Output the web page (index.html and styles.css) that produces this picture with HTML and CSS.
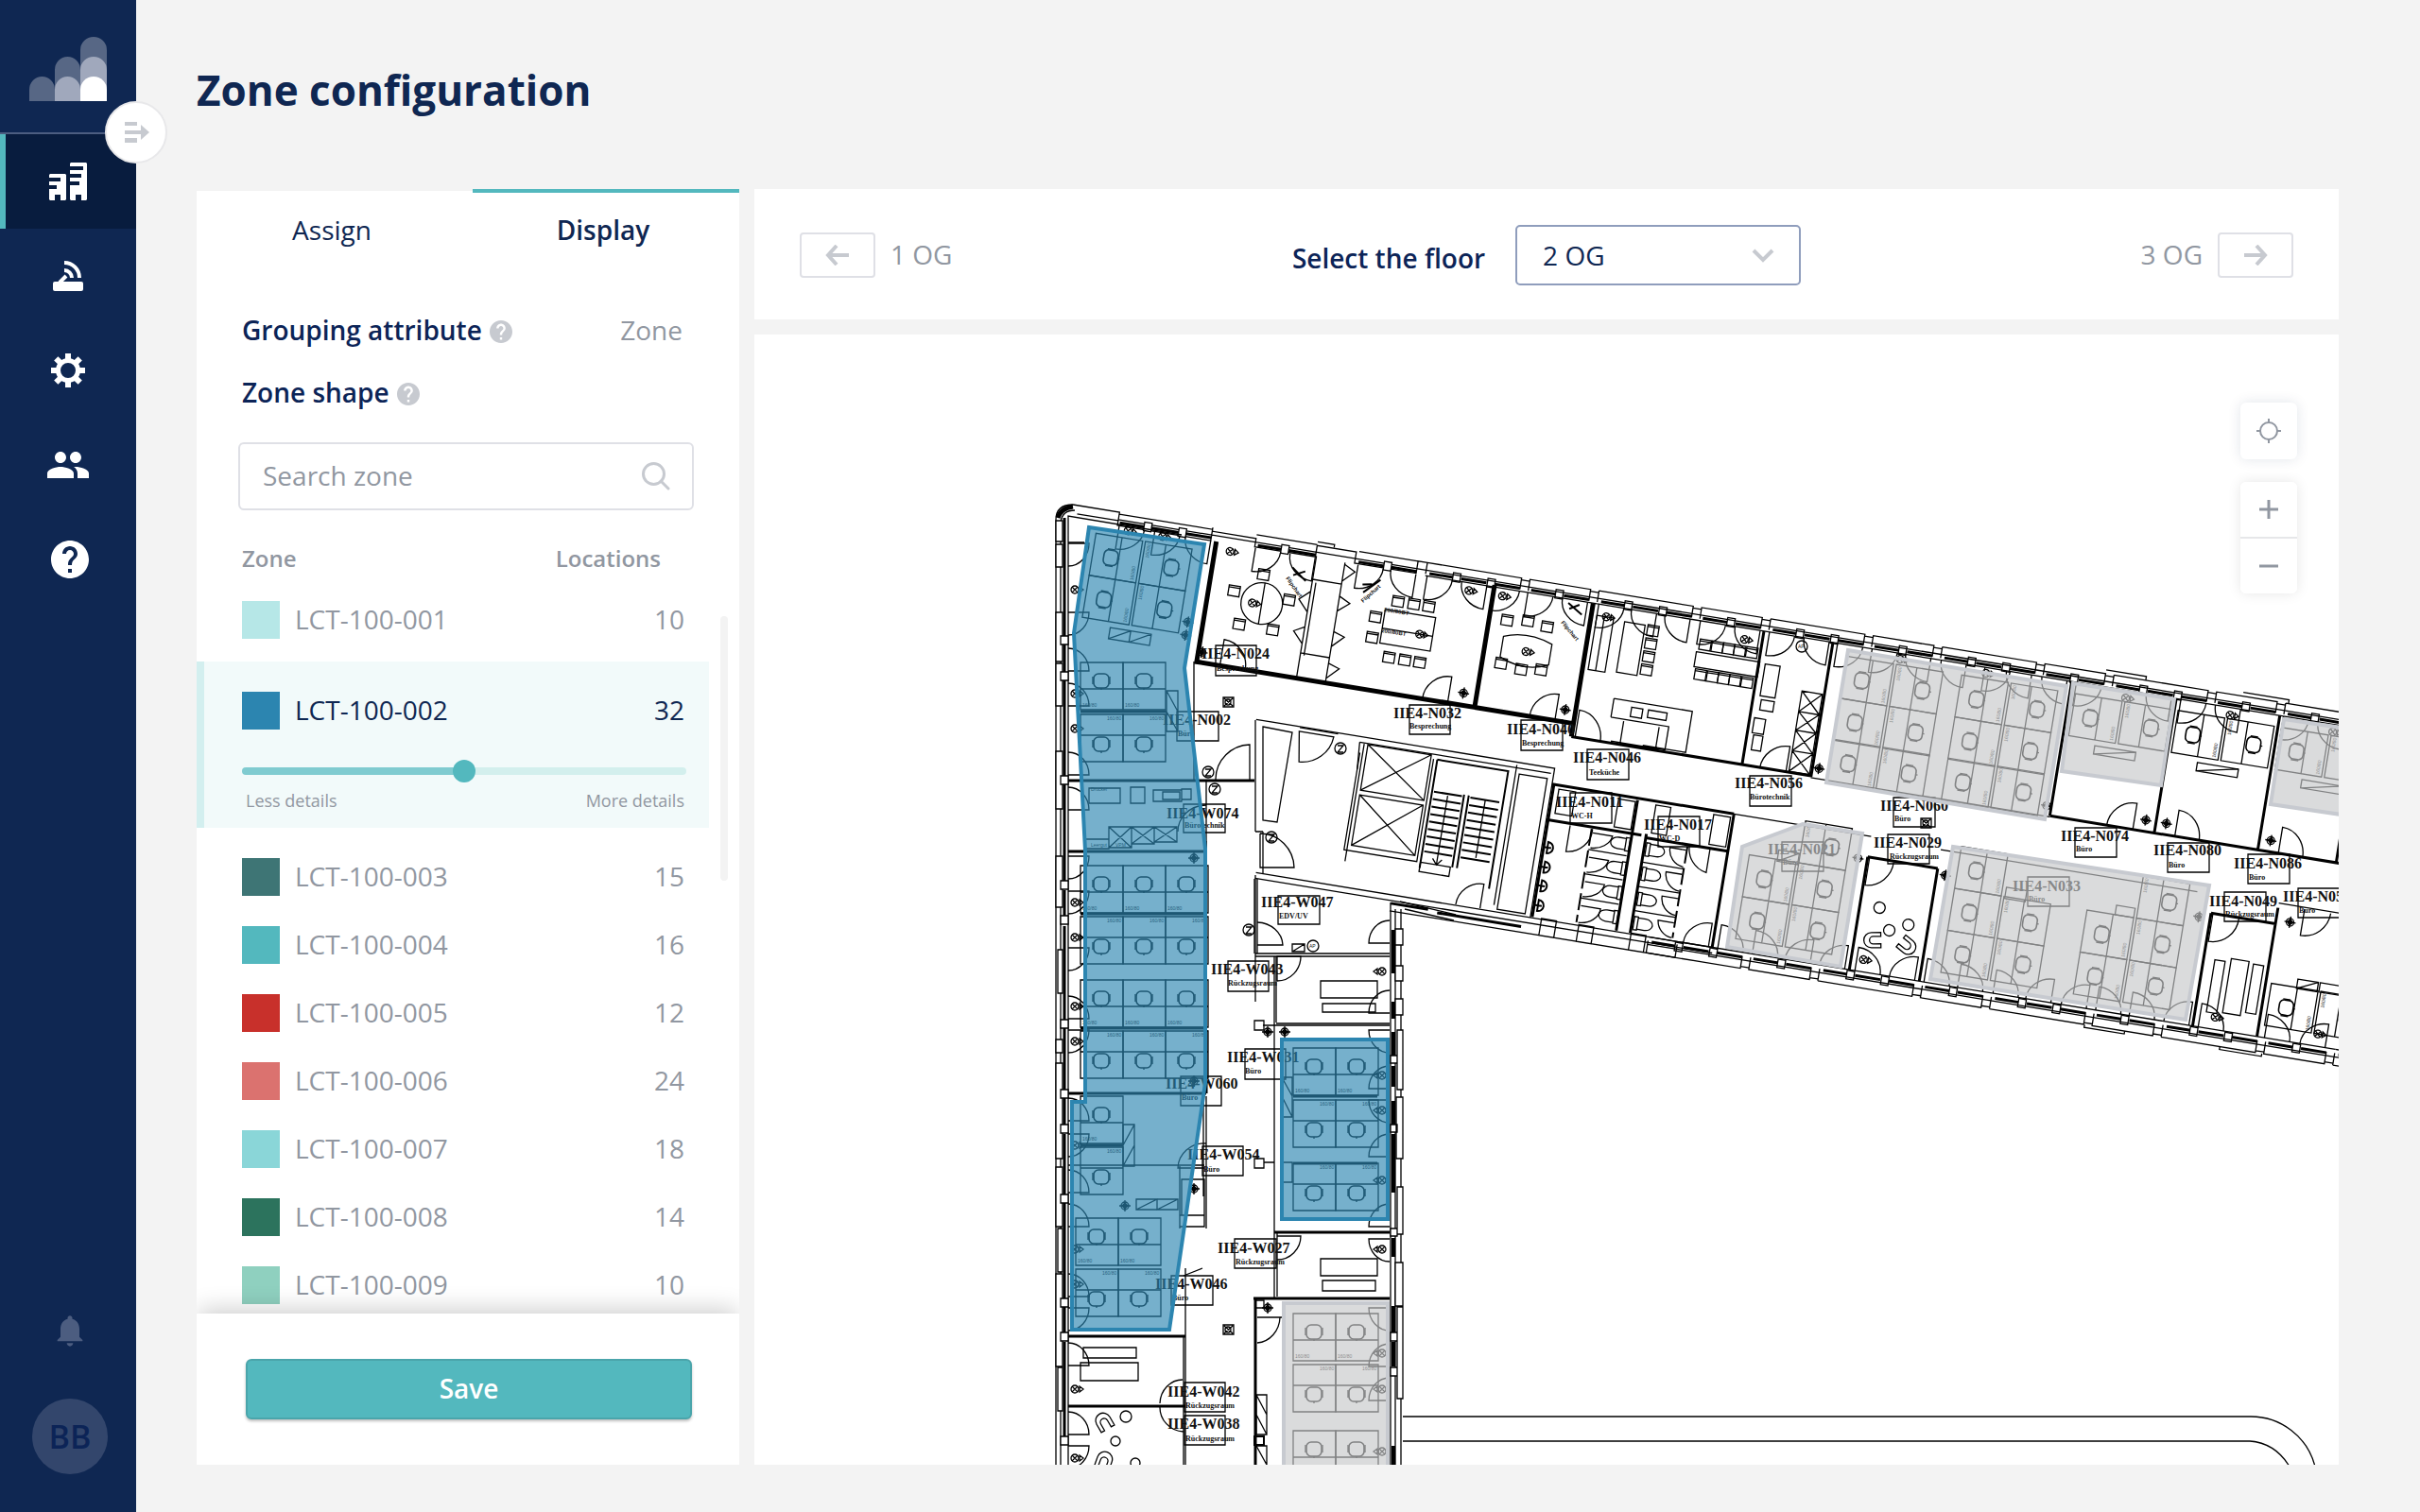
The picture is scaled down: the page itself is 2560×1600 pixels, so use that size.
FILE: index.html
```html
<!DOCTYPE html>
<html lang="en">
<head>
<meta charset="utf-8">
<title>Zone configuration</title>
<link rel="stylesheet" href="styles.css">
</head>
<body>
<div class="app">
  <aside class="sidebar">
    <a class="logo" href="#" aria-label="Home">
      <svg width="82" height="68" viewBox="0 0 82 68">
        <path fill="#576785" d="M0 68V56a13.500 14 0 0 1 27 0V68zM27 68V35a13.500 14 0 0 1 27 0V68zM54 68V14a14 14 0 0 1 28 0V68z"/>
        <path fill="#a0a8bc" d="M27 68V56a13.500 14 0 0 1 27 0V68zM54 68V35a14 14 0 0 1 28 0V68z"/>
        <path fill="#fff" d="M54 68V56a14 14 0 0 1 28 0V68z"/>
      </svg>
    </a>
    <button class="toggle" type="button" aria-label="Expand menu">
      <svg width="26" height="22" viewBox="0 0 26 22"><path fill="#c7cad0" d="M0 0h13v4H0zM0 17h13v5H0zM0 9h17V3l9 8-9 8v-6H0z"/></svg>
    </button>
    <nav class="nav">
      <a class="nav-item active" href="#" aria-label="Buildings">
        <svg width="40" height="40" viewBox="0 0 40 40"><path fill="#fff" d="M1 12H17l1 1V39l-1 1H12V34H6v6H1l-1-1V28H8V24H0V20H12V16H0V13zM23 0H39l1 1V39l-1 1H34V34H28v6H23l-1-1V24H32V20H22V16H34V12H22V8H36V4H22V1z"/></svg>
      </a>
      <a class="nav-item" href="#" aria-label="Devices">
        <svg width="32" height="32" viewBox="0 0 32 32"><rect y="22" width="32" height="10" rx="2" fill="#fff"/><path fill="none" stroke="#fff" stroke-width="4" d="M7 23l7-7M12 2a16 16 0 0 1 16 16M12 10a8 8 0 0 1 8 8"/></svg>
      </a>
      <a class="nav-item" href="#" aria-label="Settings">
        <svg width="36" height="36" viewBox="-18 -18 36 36"><circle r="10.500" fill="none" stroke="#fff" stroke-width="5"/><g id="teeth" fill="#fff"><path d="M-3-18H3V-11H-3zM-3 11H3V18H-3zM-18-3H-11V3H-18zM11-3H18V3H11z"/></g><use href="#teeth" transform="rotate(45)"/></svg>
      </a>
      <a class="nav-item" href="#" aria-label="Users">
        <svg width="48" height="48" viewBox="0 0 24 24"><path fill="#fff" d="M16 11c1.660 0 2.990-1.340 2.990-3S17.660 5 16 5c-1.660 0-3 1.340-3 3s1.340 3 3 3zm-8 0c1.660 0 2.990-1.340 2.990-3S9.660 5 8 5C6.340 5 5 6.340 5 8s1.340 3 3 3zm0 2c-2.330 0-7 1.170-7 3.500V19h14v-2.500c0-2.330-4.670-3.500-7-3.500zm8 0c-.29 0-.62.02-.97.05 1.160.84 1.970 1.970 1.970 3.450V19h6v-2.500c0-2.330-4.670-3.500-7-3.500z"/></svg>
      </a>
      <a class="nav-item help" href="#" aria-label="Help">
        <svg width="40" height="40" viewBox="2 2 20 20"><path fill="#fff" d="M12 2C6.480 2 2 6.480 2 12s4.480 10 10 10 10-4.480 10-10S17.520 2 12 2zm1 17h-2v-2h2v2zm2.070-7.750l-.9.92C13.450 12.900 13 13.500 13 15h-2v-.5c0-1.100.45-2.100 1.170-2.830l1.240-1.260c.37-.36.59-.86.59-1.410 0-1.100-.9-2-2-2s-2 .9-2 2H8c0-2.210 1.790-4 4-4s4 1.790 4 4c0 .88-.36 1.680-.93 2.250z"/></svg>
      </a>
    </nav>
    <div class="account">
      <a href="#" aria-label="Notifications">
        <svg width="40" height="40" viewBox="0 0 24 24"><path fill="#4c5d80" d="M12 22c1.100 0 2-.9 2-2h-4c0 1.100.89 2 2 2zm6-6v-5c0-3.070-1.640-5.640-4.500-6.320V4c0-.83-.67-1.500-1.500-1.500s-1.500.67-1.500 1.500v.68C7.630 5.360 6 7.920 6 11v5l-2 2v.7h16V18l-2-2z"/></svg>
      </a>
      <a class="avatar" href="#">BB</a>
    </div>
  </aside>

  <main class="main">
    <h1>Zone configuration</h1>
    <div class="columns">
      <section class="panel">
        <div class="tabs" role="tablist">
          <button class="tab" type="button" role="tab">Assign</button>
          <button class="tab current" type="button" role="tab" aria-selected="true">Display</button>
        </div>
        <div class="settings">
          <div class="setting"><span class="name">Grouping attribute</span><svg class="hint" width="24" height="24" viewBox="2 2 20 20"><use href="#hint"/></svg><span class="value">Zone</span></div>
          <div class="setting"><span class="name">Zone shape</span><svg class="hint" width="24" height="24" viewBox="2 2 20 20"><path id="hint" fill="#c7cad0" d="M12 2C6.480 2 2 6.480 2 12s4.480 10 10 10 10-4.480 10-10S17.520 2 12 2zm1 17h-2v-2h2v2zm2.070-7.750l-.9.92C13.450 12.900 13 13.500 13 15h-2v-.5c0-1.100.45-2.100 1.170-2.830l1.240-1.260c.37-.36.59-.86.59-1.410 0-1.100-.9-2-2-2s-2 .9-2 2H8c0-2.210 1.790-4 4-4s4 1.790 4 4c0 .88-.36 1.680-.93 2.250z"/></svg></div>
        </div>
        <div class="search">
          <input type="text" placeholder="Search zone" aria-label="Search zone">
          <svg width="30" height="30" viewBox="0 0 30 30" fill="none" stroke="#c7cad0" stroke-width="3"><circle cx="12.500" cy="12.500" r="11"/><path d="M20 20l8 8" stroke-linecap="round"/></svg>
        </div>
        <div class="list">
          <table class="zones">
            <thead><tr><th>Zone</th><th class="count">Locations</th></tr></thead>
            <tbody>
              <tr class="first"><td><i class="swatch c1"></i>LCT-100-001</td><td class="count">10</td></tr>
              <tr class="selected"><td><i class="swatch c2"></i>LCT-100-002</td><td class="count">32</td></tr>
              <tr class="detail"><td colspan="2">
                <input class="slider" type="range" min="0" max="100" value="50" aria-label="Zone shape details">
                <div class="ends"><span>Less details</span><span>More details</span></div>
              </td></tr>
              <tr class="after"><td><i class="swatch c3"></i>LCT-100-003</td><td class="count">15</td></tr>
              <tr><td><i class="swatch c4"></i>LCT-100-004</td><td class="count">16</td></tr>
              <tr><td><i class="swatch c5"></i>LCT-100-005</td><td class="count">12</td></tr>
              <tr><td><i class="swatch c6"></i>LCT-100-006</td><td class="count">24</td></tr>
              <tr><td><i class="swatch c7"></i>LCT-100-007</td><td class="count">18</td></tr>
              <tr><td><i class="swatch c8"></i>LCT-100-008</td><td class="count">14</td></tr>
              <tr><td><i class="swatch c9"></i>LCT-100-009</td><td class="count">10</td></tr>
            </tbody>
          </table>
          <div class="scrollbar"></div>
        </div>
        <div class="footer"><button class="save" type="button">Save</button></div>
      </section>

      <section class="viewer">
        <div class="floors">
          <div class="step"><button type="button" aria-label="Previous floor"><svg width="26" height="22" viewBox="0 0 26 22" fill="none" stroke="#c7cad0" stroke-width="4"><path d="M25 11H3M12 1L3 11l9 10"/></svg></button><span>1 OG</span></div>
          <div class="picker">
            <label for="floor">Select the floor</label>
            <div class="select"><select id="floor"><option>2 OG</option></select><svg width="24" height="15" viewBox="0 0 24 15" fill="none" stroke="#c7cad0" stroke-width="4"><path d="M2 2l10 10L22 2"/></svg></div>
          </div>
          <div class="step"><span>3 OG</span><button type="button" aria-label="Next floor"><svg width="26" height="22" viewBox="0 0 26 22" fill="none" stroke="#c7cad0" stroke-width="4"><path d="M1 11H23M14 1l9 10-9 10"/></svg></button></div>
        </div>
        <div class="map">
          <svg class="plan" viewBox="798 354 1676 1196" preserveAspectRatio="xMinYMin slice" stroke-width="1.300">
            <defs>
              <g id="chair"><rect x="-8" y="-7" width="16" height="15" rx="5" stroke-width="1.600"/><path d="M-9-4V4M9-4V4M0 8V10"/></g>
              <g id="desk"><path d="M0 0H45V50H0zM0 28H45"/><use href="#chair" x="22" y="19"/><text class="tiny" x="2" y="47">160/80</text></g>
              <g id="deskf"><path d="M0 0H45V50H0zM0 22H45"/><use href="#chair" x="22" y="31"/><text class="tiny" x="28" y="6">160/80</text></g>
              <g id="dl"><use href="#desk" transform="translate(-51 22) rotate(-90)"/></g>
              <g id="dr"><use href="#deskf" transform="translate(2 22) rotate(-90)"/></g>
              <g id="dd"><use href="#dl"/><use href="#dr"/></g>
              <path id="sr" d="M0 0V25A27 25 0 0 0 27 0"/>
              <path id="sl" d="M0 0V25A27 25 0 0 1 -27 0"/>
              <path id="sd" d="M0 0H22A22 24 0 0 1 0 24"/>
              <path id="su" d="M0 0H22A22 24 0 0 0 0-24"/>
              <g id="lamp"><circle r="4"/><path d="M-3-3L3 3M-3 3L3-3M5-3L9 0 5 3z"/></g>
              <g id="target"><circle r="4"/><path fill="#111" d="M0-3L3 0 0 3-3 0z"/><path d="M-6 0H6M0-6V6"/></g>
              <g id="zed"><circle r="6"/><path d="M-3-3H3L-3 4H3"/></g>
              <g id="xbox"><path d="M-5-5H6V5H-5zM-4-4L5 4M-4 4L5-4"/><circle r="3"/></g>
              <g id="seat"><path d="M-6-5H6V6H-6zM-6-3H6"/></g>
              <g id="pin"><path d="M-4-7H4V2H-4z" fill="#fff"/></g>
              <path id="bar" d="M0 0H27" stroke-width="3"/>
              <g id="bay5"><path d="M0 0H101V12M0 0V12M110 12V0H175V12M101 2H110M175 2H184"/><use href="#bar" x="4" y="11"/><use href="#bar" x="38" y="11"/><use href="#bar" x="74" y="11"/><use href="#bar" x="113" y="11"/><use href="#bar" x="148" y="11"/><use href="#pin" x="33" y="13"/><use href="#pin" x="70" y="13"/><use href="#pin" x="143" y="13"/><path d="M0 8H184M0 14H184"/></g>
              <g id="bay5b"><path d="M0 17H101V4M0 17V4M110 4V17H175V4M101 15H110M175 15H184"/><use href="#bar" x="4" y="5"/><use href="#bar" x="38" y="5"/><use href="#bar" x="74" y="5"/><use href="#bar" x="113" y="5"/><use href="#bar" x="148" y="5"/><use href="#pin" x="33" y="8"/><use href="#pin" x="70" y="8"/><use href="#pin" x="143" y="8"/><path d="M0 8H184M0 0H184"/></g>
              <g id="toilet"><path d="M6-6H-2A8 6 0 0 0 -2 6H6zM6-7H10V7H6z"/></g>
              <g id="arm"><path d="M-8 8V-2A8 8 0 0 1 8-2V8L4 8V0A4 4 0 0 0 -4 0V8z"/></g>
            </defs>

            <!-- north wing, drawn along its own axis -->
            <g class="ink" transform="translate(1135 534) rotate(9.3)">
              <path d="M0 0H50V14H150V4H197V13H262V1H304V13H370V0H380M6 9H50M50 2H150V14M50 8H380M150 0V14M197 0H262M262-3H280V0M307 0H370"/>
              <path stroke-width="3" d="M52 11H78M86 11H115M123 11H150M200 11H225M233 11H262M308 11H335M343 11H370"/>
              <use href="#pin" x="82" y="13"/><use href="#pin" x="119" y="13"/><use href="#pin" x="229" y="13"/><use href="#pin" x="339" y="13"/>
              <use href="#bay5" x="380"/><use href="#bay5" x="564"/><use href="#bay5" x="748"/><use href="#bay5" x="932"/><use href="#bay5" x="1116"/><use href="#bay5" x="1300"/>
              <use href="#bay5b" x="675" y="353"/><use href="#bay5b" x="859" y="353"/><use href="#bay5b" x="1043" y="353"/><use href="#bay5b" x="1227" y="353"/><use href="#bay5b" x="1411" y="353"/>
              <path d="M1107-4H1150V0M1254-4H1303V0M1145 370V373H1188V370M1290 370V373H1335V370"/>
              <!-- walls -->
              <g class="wall"><path d="M156 14V143H454V12M560 14V157M454 143H560"/></g>
              <g class="double"><path d="M743 14V158M817 14V158M1073 14V158M1185 14V158M1296 14V158M1380 120V158M743 210V353M890 232V353M965 232V353M1258 232V353M1327 215V353M560 157H817M1073 158H1400M890 232H965M1258 232H1327M548 210H743M548 248H650"/></g>
              <path d="M817 159H1073M743 210H890M965 212H1240M1327 210H1400M263 12V143M267 40V118M294 14V143M263 37H294M263 116H294M294 16L306 22 294 34M294 50L306 56 294 66M294 88L306 92 294 104M294 122L306 126 294 138M263 50L252 60 263 72M263 88L252 94 263 106"/>
              <!-- window sashes -->
              <use href="#sr" x="52" y="14"/><use href="#sr" x="90" y="14"/><use href="#sl" x="150" y="14"/><use href="#sr" x="198" y="14"/><use href="#sl" x="262" y="14"/><use href="#sr" x="308" y="14"/><use href="#sl" x="370" y="14"/><use href="#sr" x="382" y="14"/>
              <use href="#sl" x="446" y="14"/><use href="#sr" x="454" y="14"/><use href="#sr" x="490" y="14"/><use href="#sl" x="554" y="14"/><use href="#sr" x="566" y="14"/><use href="#sl" x="628" y="14"/><use href="#sl" x="664" y="14"/><use href="#sr" x="675" y="14"/><use href="#sl" x="739" y="14"/><use href="#sr" x="749" y="14"/><use href="#sl" x="813" y="14"/>
              <use href="#sr" x="822" y="14"/><use href="#sr" x="859" y="14"/><use href="#sl" x="922" y="14"/><use href="#sl" x="960" y="14"/><use href="#sr" x="980" y="14"/><use href="#sl" x="1030" y="14"/><use href="#sl" x="1068" y="14"/><use href="#sr" x="1078" y="14"/><use href="#sl" x="1180" y="14"/><use href="#sr" x="1190" y="14"/><use href="#sl" x="1254" y="14"/><use href="#sr" x="1300" y="14"/><use href="#sl" x="1364" y="14"/>
              <g transform="matrix(1 0 0 -1 0 353)"><use href="#sl" x="739"/><use href="#sr" x="749"/><use href="#sr" x="786"/><use href="#sl" x="848"/><use href="#sl" x="885"/><use href="#sr" x="896"/><use href="#sl" x="960"/><use href="#sr" x="970"/><use href="#sr" x="1006"/><use href="#sr" x="1044"/><use href="#sl" x="1106"/><use href="#sl" x="1144"/><use href="#sr" x="1154"/><use href="#sr" x="1190"/><use href="#sl" x="1254"/><use href="#sr" x="1264"/><use href="#sr" x="1335"/><use href="#sl" x="1400"/></g>
              <!-- room doors -->
              <path d="M181 143V115A27 27 0 0 1 208 143M425 143V115A27 27 0 0 0 398 143M540 143V115A27 27 0 0 0 513 143M564 157V128A27 29 0 0 1 591 157M790 158V130A28 28 0 0 0 762 158M1162 158V130A28 28 0 0 0 1134 158M1207 158V130A26 28 0 0 1 1233 158M1318 158V130A26 28 0 0 1 1344 158M892 233V262A28 28 0 0 0 918 233M1260 233V262A28 28 0 0 0 1288 233M1355 212V240A28 28 0 0 0 1383 212"/>
              <!-- meeting rooms -->
              <circle cx="214" cy="71" r="22"/><path d="M214 49V93M344 56H398V92H344zM344 76H398"/>
              <use href="#seat" x="211" y="40"/><use href="#seat" x="242" y="62"/><use href="#seat" x="183" y="62"/><use href="#seat" x="194" y="96"/><use href="#seat" x="230" y="96"/>
              <use href="#seat" x="356" y="45"/><use href="#seat" x="373" y="45"/><use href="#seat" x="389" y="45"/><use href="#seat" x="356" y="105"/><use href="#seat" x="373" y="105"/><use href="#seat" x="389" y="105"/><use href="#seat" x="335" y="65"/><use href="#seat" x="335" y="87"/>
              <path d="M472 64Q496 54 524 64V86Q499 98 472 86z"/>
              <use href="#seat" x="473" y="46"/><use href="#seat" x="495" y="43"/><use href="#seat" x="516" y="46"/><use href="#seat" x="474" y="92"/><use href="#seat" x="496" y="95"/><use href="#seat" x="517" y="92"/>
              <path d="M240 28L256 40M242 36L254 30M318 42L334 26M316 34L326 32M534 18L550 28M536 24L546 18" stroke-width="2"/>
              <!-- kitchen and canteen -->
              <path d="M566 26H584V84H566zM574 26V84M596 28H618V82H596zM676 47H744V63H676zM598 110H682V154H636M598 110V130M598 130H660V155H602M612 132V156H650V132M618 116H630V126H618zM636 116H656V124H636z"/>
              <g transform="translate(627 0)"><use href="#seat" y="32"/><use href="#seat" y="46"/><use href="#seat" y="60"/><use href="#seat" y="74"/></g>
              <use href="#seat" x="684" y="38"/><use href="#seat" x="697" y="38"/><use href="#seat" x="709" y="38"/><use href="#seat" x="721" y="38"/><use href="#seat" x="734" y="38"/><use href="#seat" x="684" y="70"/><use href="#seat" x="697" y="70"/><use href="#seat" x="709" y="70"/><use href="#seat" x="721" y="70"/><use href="#seat" x="734" y="70"/>
              <path d="M750 48H766V82H750zM752 86H766V97H752zM748 106H760V122H748zM750 124H760V140H750zM793 70H815V156H793zM793 92H815M793 112H815M793 134H815M793 70L815 92M793 92L815 70M793 92L815 112M793 112L815 92M793 112L815 134M793 134L815 112M793 134L815 156M793 156L815 134"/>
              <!-- lounge and phone booths -->
              <circle cx="911" cy="283" r="6"/><circle cx="925" cy="305" r="6"/><circle cx="944" cy="296" r="6"/>
              <use href="#arm" transform="translate(910 318) rotate(-100)"/><use href="#arm" transform="translate(946 318) rotate(120)"/>
              <path d="M1270 280H1281V336H1270zM1287 276H1306V334H1287zM1311 278H1322V330H1311z"/>
              <!-- desks -->
              <use href="#dd" x="80" y="49"/><use href="#dd" x="80" y="94"/>
              <use href="#dd" x="885" y="49"/><use href="#dd" x="885" y="94"/><use href="#dd" x="885" y="138"/>
              <use href="#dd" x="1008" y="49"/><use href="#dd" x="1008" y="94"/><use href="#dd" x="1008" y="138"/>
              <use href="#dd" x="1130" y="49"/><use href="#dd" x="1240" y="49"/><use href="#dd" x="1351" y="49"/>
              <use href="#dr" x="817" y="228"/><use href="#dd" x="817" y="273"/><use href="#dd" x="817" y="318"/>
              <use href="#dl" x="1037" y="228"/><use href="#dd" x="1037" y="273"/><use href="#dd" x="1037" y="318"/>
              <use href="#dr" x="1179" y="228"/><use href="#dd" x="1179" y="273"/><use href="#dd" x="1179" y="318"/>
              <use href="#dd" x="1384" y="318"/>
              <path d="M60 122H82V134H60zM60 134L82 122M82 122H104V134H82zM82 134L104 122M1108 77H1152V86H1108zM1108 86L1152 77M1218 77H1262V86H1218zM1218 86L1262 77M1330 77H1374V86H1330zM1330 86L1374 77M796 240H818V252H796zM796 252L818 240M1040 240H1062V252H1040zM1158 240H1178V250H1158zM1360 286H1382V296H1360zM1360 296L1382 286M1384 286H1406V296H1384z"/>
              <use href="#lamp" x="62" y="18"/><use href="#lamp" x="99" y="18"/><use href="#lamp" x="172" y="22"/><use href="#lamp" x="204" y="72"/><use href="#lamp" x="384" y="76"/><use href="#lamp" x="428" y="22"/><use href="#lamp" x="464" y="22"/><use href="#lamp" x="498" y="76"/><use href="#lamp" x="576" y="26"/><use href="#lamp" x="724" y="26"/><use href="#lamp" x="890" y="20"/><use href="#lamp" x="982" y="20"/><use href="#lamp" x="1132" y="22"/><use href="#lamp" x="1244" y="22"/><use href="#lamp" x="1354" y="22"/><use href="#lamp" x="903" y="340"/><use href="#lamp" x="1280" y="340"/><use href="#lamp" x="1390" y="340"/>
              <use href="#target" x="140" y="103"/><use href="#target" x="140" y="117"/><use href="#target" x="160" y="132"/><use href="#target" x="440" y="130"/><use href="#target" x="549" y="130"/><use href="#target" x="824" y="148"/><use href="#target" x="1068" y="148"/><use href="#target" x="1174" y="146"/><use href="#target" x="1196" y="146"/><use href="#target" x="1308" y="146"/><use href="#target" x="880" y="235"/><use href="#target" x="974" y="238"/><use href="#target" x="1246" y="238"/><use href="#target" x="1342" y="228"/>
              <!-- service core -->
              <path d="M228 193H548V353M340 199H545M340 199L342 228M508 196V346M345 326V200"/>
              <path d="M275 198H312A34 34 0 0 1 280 230zM275 194H316M349 200H417V249H349zM349 200L417 249M349 249L417 200M349 254H417V308H349zM349 254L417 308M349 308L417 254M342 210V314H420V204"/>
              <g stroke-width="2"><path d="M424 204H500V330M424 204V320M458 236V314M463 236V314"/><path d="M426 238H456M426 246H456M426 254H456M426 262H456M426 270H456M426 278H456M426 286H456M426 294H456M426 302H456M465 238H496M465 246H496M465 254H496M465 262H496M465 270H496M465 278H496M465 286H496M465 294H496M465 302H496"/></g>
              <path d="M424 314H456V324H424zM441 240V314M436 308L441 314 446 308M481 238V300M512 205H542V350H512zM494 352V326A26 26 0 0 0 468 352"/>
              <!-- wash rooms -->
              <g class="double"><path d="M550 210V352M640 212V352M655 246V352M655 250H743"/></g>
              <path stroke-dasharray="18 5" stroke-width="2" d="M597 250V350M700 252V350"/>
              <path d="M597 272H638M597 298H638M597 324H638M656 276H700M656 302H700M656 328H700M599 254H620A22 18 0 0 1 599 270M599 280H620A22 18 0 0 1 599 296M599 306H620A22 18 0 0 1 599 322M599 332H620A22 18 0 0 1 599 350M699 256H682A18 18 0 0 0 699 274M699 282H682A18 18 0 0 0 699 300M699 308H682A18 18 0 0 0 699 326M699 334H682A18 18 0 0 0 699 350M620 214H638V244H620zM660 214H676V244H660zM722 214H740V246H722zM556 214H574V240H556zM574 250V278A26 26 0 0 0 598 250M724 250V276A26 26 0 0 1 702 250"/>
              <use href="#toilet" x="629" y="260"/><use href="#toilet" x="629" y="286"/><use href="#toilet" x="629" y="312"/><use href="#toilet" x="629" y="338"/>
              <g transform="matrix(-1 0 0 1 0 0)"><use href="#toilet" x="-667" y="262"/><use href="#toilet" x="-667" y="288"/><use href="#toilet" x="-667" y="315"/><use href="#toilet" x="-667" y="341"/></g>
              <g stroke-width="2"><path d="M554 271A6 6 0 0 1 554 283zM554 292A6 6 0 0 1 554 304zM554 312A6 6 0 0 1 554 324zM554 333A6 6 0 0 1 554 345zM550 277H558M550 298H558M550 318H558M550 339H558"/></g>
              <path d="M254 353H744M254 359H744M400 370H706V356M560 352H576V370H560zM600 352H616V370H600zM656 352H672V370H656z"/>
              <path stroke-width="3" d="M400 362H440M450 364H540"/>
            </g>

            <!-- west wing -->
            <g class="ink">
              <path d="M1117 1560V550Q1117 534 1135 534M1122 1560V552Q1124 540 1137 540M1130 1560V546L1250 566M1130 574H1147"/>
              <path stroke-width="3" d="M1126 548V674M1126 682V712M1126 720V822M1126 830V934M1126 942V970M1126 980V1080M1126 1088V1154M1126 1162V1190M1126 1200V1264M1126 1272V1374M1126 1382V1410M1126 1420V1520"/>
              <path stroke-width="5" d="M1119 548Q1122 538 1135 536"/>
              <path fill="#fff" d="M1117 551H1124V573H1117zM1117 576H1124V600H1117zM1117 648H1124V700H1117zM1117 702H1124V747H1117zM1117 795H1124V856H1117zM1117 906H1124V960H1117zM1119 1005H1124V1051H1119zM1117 1100H1124V1114H1117zM1117 1125H1124V1226H1117zM1117 1235H1124V1298H1117zM1119 1300H1124V1346H1119zM1117 1348H1124V1446H1117zM1119 1447H1124V1493H1119z"/>
              <path fill="#fff" d="M1122 673H1130V682H1122zM1122 711H1130V720H1122zM1122 821H1130V830H1122zM1122 932H1130V941H1122zM1122 969H1130V978H1122zM1122 1079H1130V1088H1122zM1122 1153H1130V1162H1122zM1122 1190H1130V1199H1122zM1122 1264H1130V1273H1122zM1122 1374H1130V1383H1122zM1122 1410H1130V1419H1122zM1122 1520H1130V1529H1122z"/>
              <g>
                <use href="#sd" x="1130" y="575"/><use href="#sd" x="1130" y="648"/><use href="#su" x="1130" y="710"/><use href="#su" x="1130" y="747"/><use href="#su" x="1130" y="820"/><use href="#su" x="1130" y="857"/><use href="#sd" x="1130" y="906"/><use href="#sd" x="1130" y="943"/><use href="#sd" x="1130" y="1003"/><use href="#su" x="1130" y="1078"/><use href="#sd" x="1130" y="1090"/><use href="#su" x="1130" y="1186"/><use href="#sd" x="1130" y="1200"/><use href="#su" x="1130" y="1262"/><use href="#su" x="1130" y="1298"/><use href="#su" x="1130" y="1372"/><use href="#sd" x="1130" y="1384"/><use href="#su" x="1130" y="1445"/><use href="#su" x="1130" y="1518"/><use href="#sd" x="1130" y="1530"/>
                <use href="#lamp" x="1137" y="624"/><use href="#lamp" x="1137" y="734"/><use href="#lamp" x="1137" y="771"/><use href="#lamp" x="1137" y="955"/><use href="#lamp" x="1137" y="992"/><use href="#lamp" x="1137" y="1065"/><use href="#lamp" x="1137" y="1102"/><use href="#lamp" x="1137" y="1212"/><use href="#lamp" x="1137" y="1322"/><use href="#lamp" x="1137" y="1359"/><use href="#lamp" x="1137" y="1470"/><use href="#lamp" x="1137" y="1543"/>
              </g>
              <g stroke-width="3"><path d="M1130 826H1327M1130 901H1276M1130 1157H1276M1276 1090V1157M1348 1304H1470M1326 1374H1470M1130 1414H1254M1130 1488H1254M1328 1374V1560M1275 890V1075"/></g>
              <path d="M1263 700V826M1276 826V900M1276 1160V1300M1273 1160V1266M1130 1233H1274M1248 1234V1300M1250 1248H1274V1286H1250zM1248 1286H1274V1298H1248zM1252 1350L1272 1342M1254 1342V1560M1252 1415V1560M1327 930V1009M1330 930V1009M1328 1009H1470M1328 1012H1470M1348 1012V1374M1350 1012V1082M1336 1085H1470M1350 1083H1470M1327 1080H1337V1090H1327zM1327 1226H1337V1236H1327zM1337 1230H1348M1351 1304V1372M1328 1376H1337V1384H1328zM1330 1394H1356"/>
              <path d="M1286 825V824A37 37 0 0 1 1322 788V826M1351 1038V1012H1376A25 26 0 0 1 1351 1038M1351 1308H1376A25 25 0 0 1 1351 1333M1276 1210A28 27 0 0 0 1246 1236H1274M1251 1460A24 26 0 0 0 1227 1485M1227 1488A26 26 0 0 0 1252 1515M1276 852A30 28 0 0 0 1246 880M1330 1421A26 28 0 0 0 1354 1394"/>
              <!-- stair core -->
              <path d="M1328 762V880M1328 926V1060M1336 769L1367 775 1351 870 1336 868zM1333 882V918H1369A36 37 0 0 0 1333 882M1336 880V924M1328 880H1336M1330 1000H1357A28 25 0 0 0 1330 976"/>
              <use href="#zed" x="1278" y="817"/><use href="#zed" x="1285" y="835"/><use href="#zed" x="1418" y="792"/><use href="#zed" x="1345" y="886"/><use href="#zed" x="1321" y="984"/>
              <use href="#xbox" x="1299" y="743"/><use href="#xbox" x="1299" y="1407"/><use href="#xbox" x="2037" y="871"/>
              <path d="M1367 999H1380V1007H1367zM1367 1007L1380 999"/><circle cx="1389" cy="1001" r="6"/><circle cx="1906" cy="684" r="6"/>
              <text class="tiny" x="1385" y="1003">AP</text><text class="tiny" x="1902" y="686">AP</text>
              <!-- courtyard facade -->
              <path d="M1471 955V1560M1482 962V1560M1476 962V1560M1481 954L1540 968M1486 962L1538 974"/>
              <path stroke-width="4" d="M1474 984V1030M1474 1060V1078M1474 1092V1118M1474 1128V1150M1474 1165V1190M1474 1200V1262M1474 1310V1330M1474 1382V1412M1474 1420V1446M1474 1530V1560"/>
              <path fill="#fff" d="M1476 983H1484V1000H1476zM1476 1022H1484V1038H1476zM1476 1057H1484V1074H1476zM1478 1090H1484V1153H1478zM1477 1161H1484V1226H1477zM1478 1256H1484V1306H1478zM1476 1336H1484V1382H1476zM1478 1383H1484V1480H1478zM1471 1117H1478V1125H1471zM1471 1190H1478V1198H1471zM1471 1300H1478V1308H1471zM1471 1410H1478V1419H1471zM1471 1447H1478V1456H1471z"/>
              <g transform="matrix(-1 0 0 1 1470 0)"><use href="#su" y="998"/><use href="#su" y="1072"/><use href="#sd" y="1090"/><use href="#su" y="1152"/><use href="#sd" y="1164"/><use href="#su" y="1224"/><use href="#su" y="1298"/><use href="#sd" y="1311"/><use href="#sd" y="1384"/><use href="#su" y="1446"/><use href="#su" y="1482"/>
                <use href="#lamp" x="8" y="1028"/><use href="#lamp" x="8" y="1138"/><use href="#lamp" x="8" y="1175"/><use href="#lamp" x="8" y="1249"/><use href="#lamp" x="8" y="1322"/><use href="#lamp" x="8" y="1432"/><use href="#lamp" x="8" y="1470"/><use href="#lamp" x="8" y="1536"/></g>
              <path d="M1397 1038H1457V1056H1397zM1399 1062H1455V1071H1399zM1397 1332H1457V1350H1397zM1399 1355H1455V1366H1399zM1146 1426H1202V1437H1146zM1143 1442H1204V1461H1143z"/>
              <!-- copy room -->
              <path d="M1152 834H1185V850H1152zM1196 833H1211V850H1196zM1220 836H1250V848H1220zM1230 838H1248V846H1230zM1250 835H1260V846H1250zM1148 888H1173V898H1148zM1173 875H1197V897H1173zM1197 875H1221V893H1197zM1221 875H1245V891H1221zM1173 875L1197 897M1173 897L1197 875M1197 875L1221 893M1197 893L1221 875M1221 875L1245 891M1221 891L1245 875"/>
              <text class="tiny" x="1154" y="837">Drucker</text><text class="tiny" x="1154" y="896">Leergut</text><text class="tiny" x="1180" y="896">VPM</text>
              <path d="M1234 731H1246V774H1234zM1234 731L1246 753M1234 753L1246 774M1188 1190H1200V1234H1188zM1188 1234L1200 1212M1188 1212L1200 1190M1202 1269H1246V1280H1202zM1202 1280L1224 1269 1224 1280 1246 1269M1356 1140H1367V1182H1356zM1356 1140L1367 1160M1356 1160L1367 1182M1356 1230H1367V1251H1356zM1329 1476H1340V1518H1329zM1329 1476L1340 1497M1329 1497L1340 1518M1329 1530H1340V1550M1329 1530L1340 1550"/>
              <path stroke-width="2" d="M1327 1520H1337V1529H1327z"/>
              <!-- desks -->
              <use href="#desk" x="1143" y="701"/><use href="#desk" x="1188" y="701"/><use href="#deskf" x="1143" y="756"/><use href="#deskf" x="1188" y="756"/>
              <use href="#desk" x="1143" y="916"/><use href="#desk" x="1188" y="916"/><use href="#desk" x="1233" y="916"/><use href="#deskf" x="1143" y="970"/><use href="#deskf" x="1188" y="970"/><use href="#deskf" x="1233" y="970"/>
              <use href="#desk" x="1143" y="1037"/><use href="#desk" x="1188" y="1037"/><use href="#desk" x="1233" y="1037"/><use href="#deskf" x="1143" y="1091"/><use href="#deskf" x="1188" y="1091"/><use href="#deskf" x="1233" y="1091"/>
              <use href="#desk" x="1143" y="1160"/><use href="#deskf" x="1143" y="1214"/>
              <use href="#desk" x="1138" y="1289"/><use href="#desk" x="1183" y="1289"/><use href="#deskf" x="1138" y="1343"/><use href="#deskf" x="1183" y="1343"/>
              <use href="#desk" x="1368" y="1109"/><use href="#desk" x="1413" y="1109"/><use href="#deskf" x="1368" y="1164"/><use href="#deskf" x="1413" y="1164"/><use href="#deskf" x="1368" y="1231"/><use href="#deskf" x="1413" y="1231"/>
              <use href="#desk" x="1368" y="1390"/><use href="#desk" x="1413" y="1390"/><use href="#deskf" x="1368" y="1444"/><use href="#deskf" x="1413" y="1444"/><use href="#desk" x="1368" y="1514"/><use href="#desk" x="1413" y="1514"/>
              <g stroke-width="3"><path d="M1143 753H1234M1143 967H1276M1143 1088H1276M1143 1212H1188M1368 1160H1457M1368 1231H1457"/></g>
              <use href="#target" x="1263" y="908"/><use href="#target" x="1263" y="1144"/><use href="#target" x="1263" y="1258"/><use href="#target" x="1190" y="1276"/><use href="#target" x="1341" y="1092"/><use href="#target" x="1359" y="1092"/><use href="#target" x="1341" y="1384"/>
              <circle cx="1191" cy="1499" r="6"/><circle cx="1180" cy="1525" r="5"/><circle cx="1201" cy="1548" r="5"/>
              <use href="#arm" transform="translate(1168 1505) rotate(-30)"/><use href="#arm" transform="translate(1168 1546) rotate(20)"/>
              <!-- driveway -->
              <path d="M1484 1499H2380A70 70 0 0 1 2449 1552M1484 1525H2380Q2407 1527 2422 1552"/>
            </g>

            <g class="tags">
              <path d="M1286 683h43v32h-43zM1245 753h44v31h-44zM1252 851h44v30h-44zM1491 746h43v31h-43zM1352 948h44v30h-44zM1609 762h44v32h-44zM1679 793h44v32h-44zM1851 821h44v32h-44zM1661 839h44v32h-44zM1754 864h44v32h-44zM1885 891h44v31h-44zM2003 844h44v31h-44zM1997 883h44v31h-44zM2195 876h44v31h-44zM2293 892h44v31h-44zM2378 904h44v31h-44zM2145 928h44v31h-44zM2353 944h44v31h-44zM2431 940h50v31h-50zM1299 1017h43v32h-43zM1317 1110h43v32h-43zM1249 1139h43v31h-43zM1272 1213h43v31h-43zM1306 1311h44v31h-44zM1239 1350h44v31h-44zM1253 1463h43v31h-43zM1253 1498h43v31h-43z"/>
              <text x="1271" y="697">IIE4-N024</text><text x="1230" y="767">IIE4-N002</text><text x="1234" y="866">IIE4-W074</text><text x="1474" y="760">IIE4-N032</text><text x="1334" y="960">IIE4-W047</text>
              <text x="1594" y="777">IIE4-N040</text><text x="1664" y="807">IIE4-N046</text><text x="1835" y="834">IIE4-N056</text><text x="1646" y="854">IIE4-N011</text><text x="1739" y="878">IIE4-N017</text><text x="1870" y="904">IIE4-N021</text>
              <text x="1989" y="858">IIE4-N060</text><text x="1982" y="897">IIE4-N029</text><text x="2180" y="890">IIE4-N074</text><text x="2278" y="905">IIE4-N080</text><text x="2363" y="919">IIE4-N086</text><text x="2129" y="943">IIE4-N033</text><text x="2337" y="959">IIE4-N049</text><text x="2415" y="954">IIE4-N05</text>
              <text x="1281" y="1031">IIE4-W043</text><text x="1298" y="1124">IIE4-W031</text><text x="1233" y="1152">IIE4-W060</text><text x="1256" y="1227">IIE4-W054</text><text x="1288" y="1326">IIE4-W027</text><text x="1222" y="1364">IIE4-W046</text><text x="1235" y="1478">IIE4-W042</text><text x="1235" y="1512">IIE4-W038</text>
              <g class="room">
                <text x="1287" y="710">Besprechung</text><text x="1246" y="779">Büro</text><text x="1253" y="876">Bürotechnik</text><text x="1491" y="771">Besprechung</text><text x="1353" y="972">EDV/UV</text>
                <text x="1610" y="789">Besprechung</text><text x="1681" y="820">Teeküche</text><text x="1851" y="846">Bürotechnik</text><text x="1662" y="866">WC-H</text><text x="1755" y="890">WC-D</text><text x="1886" y="915">Büro</text>
                <text x="2004" y="869">Büro</text><text x="1999" y="909">Rückzugsraum</text><text x="2196" y="901">Büro</text><text x="2294" y="918">Büro</text><text x="2379" y="931">Büro</text><text x="2146" y="954">Büro</text><text x="2354" y="970">Rückzugsraum</text><text x="2432" y="966">Büro</text>
                <text x="1299" y="1043">Rückzugsraum</text><text x="1317" y="1136">Büro</text><text x="1250" y="1164">Büro</text><text x="1273" y="1240">Büro</text><text x="1307" y="1338">Rückzugsraum</text><text x="1240" y="1376">Büro</text><text x="1254" y="1490">Rückzugsraum</text><text x="1254" y="1525">Rückzugsraum</text>
              </g>
            </g>
            <g class="notes"><text transform="translate(1360 612) rotate(55)">Flipchart</text><text transform="translate(1442 638) rotate(-42)">Flipchart</text><text transform="translate(1651 659) rotate(50)">Flipchart</text><text transform="translate(1464 647) rotate(9)">200/80BT</text><text transform="translate(1461 669) rotate(9)">200/80BT</text></g>

            <g class="zone idle">
              <path d="M1955 688L2186 726 2163 867 1932 828z"/><path d="M2193 723L2300 740 2286 831 2181 816z"/><path d="M2416 761L2490 772V864L2402 851z"/>
              <path d="M1907 872L1970 882 1947 1023 1827 1002 1843 896z"/><path d="M2066 896L2337 937 2312 1079 2042 1036z"/><path d="M1358 1379H1468V1570H1358z"/>
            </g>
            <g class="zone chosen">
              <path d="M1152 558L1274 576 1253 707 1275 898V1146L1237 1407H1134V1166H1148V900L1136 670z"/><path d="M1356 1100H1468V1290H1356z"/>
            </g>
          </svg>
          <div class="controls">
            <button class="control" type="button" aria-label="Centre map"><svg width="26" height="26" viewBox="0 0 26 26" fill="none" stroke="#9197a1" stroke-width="2"><circle cx="13" cy="13" r="9"/><path d="M13 0V4M13 22V26M0 13H4M22 13H26"/></svg></button>
            <div class="zoom">
              <button class="control" type="button" aria-label="Zoom in"><svg width="20" height="20" viewBox="0 0 20 20" stroke="#9197a1" stroke-width="3"><path d="M0 10H20M10 0V20"/></svg></button>
              <button class="control" type="button" aria-label="Zoom out"><svg width="20" height="20" viewBox="0 0 20 20" stroke="#9197a1" stroke-width="3"><path d="M0 10H20"/></svg></button>
            </div>
          </div>
        </div>
      </section>
    </div>
  </main>
</div>
</body>
</html>
```
FILE: styles.css
```css
* { box-sizing: border-box; }
body { margin: 0; background: #f3f3f3; color: #0f2752; font-family: "Open Sans", "Noto Sans", sans-serif; font-size: 28px; line-height: 38px; }
button, input, select { font: inherit; color: inherit; margin: 0; padding: 0; border: 0; background: none; }
button { cursor: pointer; }
svg { display: block; flex: none; }
a { color: inherit; text-decoration: none; }

.app { display: flex; height: 100vh; }

.sidebar { position: relative; flex: none; width: 144px; background: #0f2752; display: flex; flex-direction: column; }
.logo { height: 142px; padding: 39px 0 0 31px; border-bottom: 2px solid #4c5d80; }
.toggle { position: absolute; left: 111px; top: 107px; width: 66px; height: 66px; padding-left: 2px; border: 2px solid #e8e8ea; border-radius: 50%; background: #fff; display: flex; align-items: center; justify-content: center; }
.nav { display: flex; flex-direction: column; flex: 1; }
.nav-item { height: 100px; display: flex; align-items: center; justify-content: center; }
.nav-item.active { background: #081c3e; box-shadow: inset 6px 0 #53b8be; }
.nav-item.help { padding-left: 4px; }
.account { display: flex; flex-direction: column; align-items: center; gap: 52px; padding: 0 0 40px 4px; }
.avatar { width: 80px; height: 80px; border-radius: 50%; background: #33466c; color: #0c2457; font-size: 34px; font-weight: 600; line-height: 80px; text-align: center; }

.main { flex: 1; min-width: 0; display: flex; flex-direction: column; padding: 63px 86px 50px 64px; }
h1 { margin: 0 0 73px; font-size: 44px; line-height: 64px; font-weight: 700; }
.columns { flex: 1; min-height: 0; display: flex; gap: 16px; }

.panel { flex: none; width: 574px; display: flex; flex-direction: column; background: linear-gradient(#fff, #fff) no-repeat 0 2px; }
.tabs { display: flex; height: 88px; }
.tab { flex: 1; border-top: 4px solid transparent; padding: 0 6px 6px 0; }
.tab.current { flex: none; width: 282px; border-color: #53b8be; font-weight: 600; }
.settings { padding: 42px 60px 0 48px; }
.setting { display: flex; align-items: center; height: 66px; gap: 8px; padding-bottom: 28px; }
.hint { margin-top: 4px; }
.name { font-weight: 600; color: #0c2457; }
.value { margin-left: auto; color: #9197a1; }
.search { margin: 6px 48px 0 44px; height: 72px; border: 2px solid #dfe0e6; border-radius: 6px; display: flex; align-items: center; padding: 0 23px 0 24px; }
.search input { flex: 1; min-width: 0; outline: 0; padding-bottom: 2px; }
.search input::placeholder { color: #9197a1; opacity: 1; }

.list { flex: 1; min-height: 0; overflow: hidden; display: flex; align-items: flex-start; gap: 12px; padding-top: 28px; }
.zones { width: 542px; border-collapse: collapse; color: #9197a1; }
.zones th { height: 52px; padding: 0 0 6px 48px; font-size: 24px; line-height: 32px; font-weight: 600; text-align: left; }
.zones th.count { padding-right: 51px; }
.zones td { height: 72px; padding: 16px 0 0 48px; vertical-align: top; }
.zones .count { padding-left: 0; padding-right: 26px; text-align: right; }
.zones .first td { height: 80px; }
.zones .after td { height: 88px; padding-top: 32px; }
.zones .selected td { height: 88px; padding-top: 32px; color: #0f2752; }
.selected, .detail { background: #f2fafa; box-shadow: inset 8px 0 #d3efef; }
.zones .detail td { height: 88px; padding: 16px 24px 0 48px; }
.swatch { display: inline-block; width: 40px; height: 40px; margin-right: 16px; vertical-align: top; }
.c1 { background: #b6e7e7; } .c2 { background: #2c85b0; } .c3 { background: #3e7575; }
.c4 { background: #53b8be; } .c5 { background: #c8302b; } .c6 { background: #db726f; }
.c7 { background: #8ad6d8; } .c8 { background: #2c735d; } .c9 { background: #8fd0bf; }
.slider { appearance: none; display: block; width: 100%; height: 24px; }
.slider::-webkit-slider-runnable-track { height: 8px; border-radius: 4px; background: linear-gradient(90deg, #80cbd0 50%, #d3efed 50%); }
.slider::-webkit-slider-thumb { appearance: none; width: 24px; height: 24px; margin-top: -8px; border-radius: 50%; background: #53b8be; }
.ends { display: flex; justify-content: space-between; padding: 6px 2px 0 4px; font-size: 18px; line-height: 26px; }
.scrollbar { flex: none; width: 8px; height: 280px; margin-top: 84px; border-radius: 4px; background: #f3f3f3; }
.footer { position: relative; flex: none; padding: 48px 50px 48px 52px; background: #fff; box-shadow: 0 -6px 24px -2px rgba(0, 0, 0, .2); clip-path: inset(-60px 0 0 0); }
.save { display: block; width: 100%; height: 64px; padding-bottom: 2px; border: 2px solid #4aa5ab; border-radius: 6px; background: #53b8be; color: #fff; font-weight: 600; box-shadow: 0 2px 3px rgba(0, 0, 0, .25); }

.viewer { flex: 1; min-width: 0; display: flex; flex-direction: column; gap: 16px; }
.floors { flex: none; height: 138px; background: #fff; display: flex; align-items: center; justify-content: space-between; padding: 2px 48px 0; }
.step { display: flex; align-items: center; gap: 16px; color: #9197a1; }
.step span { padding-bottom: 2px; }
.step button { width: 80px; height: 48px; border: 2px solid #dfe0e6; border-radius: 4px; display: flex; align-items: center; justify-content: center; }
.picker { display: flex; align-items: center; gap: 32px; }
.picker label { padding-top: 6px; font-weight: 600; color: #0c2457; }
.select { display: flex; align-items: center; }
.select select { appearance: none; width: 302px; height: 64px; padding: 0 70px 0 27px; border: 2px solid #8f9dbc; border-radius: 5px; }
.select svg { margin-left: -52px; margin-right: 28px; pointer-events: none; }

.map { position: relative; flex: 1; min-height: 0; background: #fff; overflow: hidden; }
.plan { width: 100%; height: 100%; }
.ink, .tags { fill: none; stroke: #000; }
.wall { stroke-width: 5; }
.double { stroke-width: 3; }
.tiny { font-family: "Liberation Sans", sans-serif; font-size: 5px; fill: #111; stroke: none; }
.tags text { font-family: "Liberation Serif", serif; font-size: 16px; font-weight: 700; fill: #111; stroke: none; }
.tags .room text { font-size: 8px; }
.notes { font-family: "Liberation Sans", sans-serif; font-size: 6px; font-weight: 700; fill: #111; }
.zone { stroke-width: 4; fill-opacity: .65; }
.idle { stroke: #c7cad0; fill: #c6c8ca; }
.chosen { stroke: #2c85b0; fill: #2c85b0; }
.controls { position: absolute; top: 72px; right: 44px; width: 60px; display: flex; flex-direction: column; gap: 24px; }
.control { display: flex; align-items: center; justify-content: center; width: 60px; height: 60px; background: #fff; border-radius: 6px; box-shadow: 0 0 14px rgba(15, 39, 82, .12); }
.zoom { background: #fff; border-radius: 6px; box-shadow: 0 0 14px rgba(0, 0, 0, .1); overflow: hidden; }
.zoom .control { height: 58px; border-radius: 0; box-shadow: none; }
.zoom .control + .control { height: 60px; border-top: 2px solid #e6e7e9; }
```
